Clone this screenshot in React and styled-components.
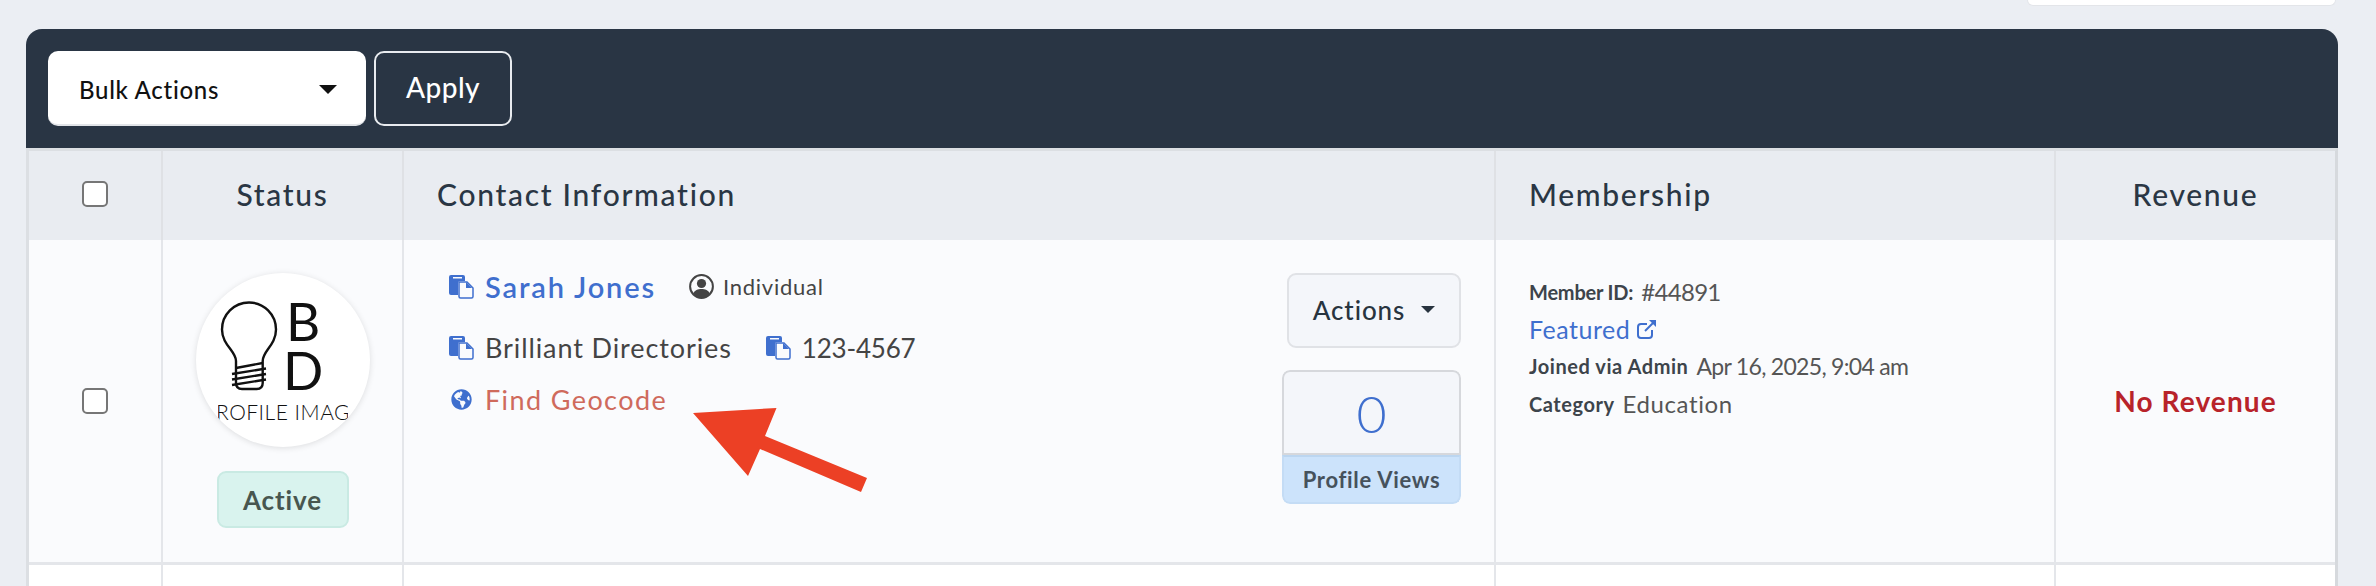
import React from 'react';
import styled, { createGlobalStyle } from 'styled-components';
import { FaGlobeAmericas } from 'react-icons/fa';

const GlobalStyle = createGlobalStyle`
  html, body {
    margin: 0;
    padding: 0;
    height: 100%;
    overflow: hidden;
    background: #ebeef3;
  }
  body {
    font-family: "Lato", "Open Sans", sans-serif;
    color: #28343f;
  }
`;

const Page = styled.div`
  width: 2376px;
  height: 586px;
  overflow: hidden;
  box-sizing: border-box;
  padding: 0 38px 0 26px;
`;

const TopStrip = styled.div`
  display: flex;
  justify-content: flex-end;
  height: 29px;
`;

const SearchStub = styled.div`
  width: 307px;
  height: 5px;
  margin-right: 2px;
  background: #fff;
  border: 1px solid #e3e5e9;
  border-top: none;
  border-radius: 0 0 8px 8px;
`;

const Panel = styled.section`
  position: relative;
  width: 2312px;
`;

const Toolbar = styled.div`
  height: 119px;
  box-sizing: border-box;
  padding: 22px 22px 0;
  display: flex;
  gap: 8px;
  background: #293544;
  border-radius: 16px 16px 0 0;
`;

const SelectBox = styled.div`
  width: 318px;
  height: 75px;
  box-sizing: border-box;
  padding: 3px 29px 0 31px;
  display: flex;
  align-items: center;
  justify-content: space-between;
  background: #fff;
  border-bottom: 2px solid #e2e4e8;
  border-radius: 10px;
  font-size: 24px;
  letter-spacing: 0.7px;
  font-weight: 500;
  color: #111;
`;

const Caret = styled.span`
  display: inline-block;
  width: 0;
  height: 0;
  border-left: ${p => p.$size}px solid transparent;
  border-right: ${p => p.$size}px solid transparent;
  border-top: ${p => p.$size}px solid ${p => p.$color};
`;

const ApplyButton = styled.button`
  width: 138px;
  height: 75px;
  padding: 0 0 4px;
  background: transparent;
  border: 2px solid #e8ebef;
  border-radius: 10px;
  color: #fff;
  font: 500 28px "Lato", sans-serif;
  letter-spacing: 0.5px;
`;

const Grid = styled.div`
  display: grid;
  grid-template-columns: 134px 241px 1092px 560px 279px;
  border-top: 3px solid #dcdfe3;
  border-right: 3px solid #d6d9dd;
  border-left: 3px solid #dcdfe3;
  box-sizing: border-box;
`;

const HeadCell = styled.div`
  height: 89px;
  box-sizing: border-box;
  display: flex;
  align-items: center;
  justify-content: ${p => (p.$left ? 'flex-start' : 'center')};
  padding-left: ${p => (p.$left ? '33px' : '0')};
  padding-bottom: 3px;
  background: #e9ecf1;
  border-right: ${p => (p.$last ? 'none' : '2px solid #dfe1e5')};
  font-size: 30px;
  font-weight: 500;
  letter-spacing: 1.7px;
  color: #2a3644;
`;

const BodyCell = styled.div`
  height: 325px;
  box-sizing: border-box;
  background: #fafbfd;
  border-right: ${p => (p.$last ? 'none' : '2px solid #e4e6ea')};
  border-bottom: 3px solid #e4e6ea;
`;

const CenterCell = styled(BodyCell)`
  display: flex;
  align-items: center;
  justify-content: center;
`;

const StatusCell = styled(BodyCell)`
  display: flex;
  flex-direction: column;
  align-items: center;
  padding-top: 33px;
  gap: 24px;
`;

const ContactCell = styled(BodyCell)`
  display: flex;
  justify-content: space-between;
  padding: 33px 33px 0 45px;
`;

const MemberCell = styled(BodyCell)`
  padding: 33px 0 0 33px;
`;

const TailCell = styled.div`
  height: 21px;
  background: #fff;
  border-right: ${p => (p.$last ? 'none' : '2px solid #e4e6ea')};
`;

const Check = styled.span`
  display: block;
  width: 26px;
  height: 26px;
  box-sizing: border-box;
  background: #fff;
  border: 2px solid #767676;
  border-radius: 5px;
`;

const Avatar = styled.div`
  width: 174px;
  height: 174px;
  border-radius: 50%;
  background: #fff;
  box-shadow: 0 1px 6px rgba(0, 0, 0, 0.12);
  overflow: hidden;
`;

const Badge = styled.span`
  width: 132px;
  height: 57px;
  box-sizing: border-box;
  display: flex;
  align-items: center;
  justify-content: center;
  background: #d9f3ee;
  border: 2px solid #c9eae3;
  border-radius: 9px;
  font-size: 26px;
  font-weight: 700;
  letter-spacing: 0.9px;
  color: #48564f;
`;

const Lines = styled.div`
  display: flex;
  flex-direction: column;
`;

const Line = styled.div`
  display: flex;
  align-items: center;
  height: ${p => p.$height}px;
  margin-bottom: ${p => p.$gap || 0}px;
`;

const IconSlot = styled.span`
  display: flex;
  justify-content: ${p => (p.$center ? 'center' : 'flex-start')};
  align-items: center;
  width: 25px;
  margin-right: 11px;
  margin-left: ${p => p.$offset || 0}px;
  color: #3f6fce;
`;

const NameLink = styled.span`
  font-size: 29px;
  font-weight: 600;
  letter-spacing: 1.85px;
  color: #3f6fce;
`;

const TypeTag = styled.span`
  display: flex;
  align-items: center;
  gap: 9px;
  margin-left: 33px;
  font-size: 22px;
  letter-spacing: 0.75px;
  color: #444;
`;

const PlainText = styled.span`
  font-size: ${p => p.$size || 27}px;
  letter-spacing: ${p => p.$spacing || '0.9px'};
  color: #444;
`;

const GeoLink = styled.span`
  font-size: 27px;
  letter-spacing: 1.4px;
  color: #cf6a5c;
`;

const Side = styled.div`
  display: flex;
  flex-direction: column;
  align-items: flex-end;
  gap: 22px;
`;

const ActionsButton = styled.div`
  width: 174px;
  height: 75px;
  box-sizing: border-box;
  padding-bottom: 2px;
  display: flex;
  align-items: center;
  justify-content: center;
  gap: 16px;
  background: #f4f6fa;
  border: 2px solid #e0e2e6;
  border-radius: 9px;
  font-size: 26px;
  font-weight: 500;
  letter-spacing: 0.9px;
  color: #28343f;
`;

const Counter = styled.div`
  width: 179px;
  border-radius: 8px;
  overflow: hidden;
`;

const CounterValue = styled.div`
  height: 85px;
  box-sizing: border-box;
  display: flex;
  align-items: center;
  justify-content: center;
  background: #f4f6fa;
  border: 2px solid #d6d8dc;
  border-radius: 8px 8px 0 0;
  font-size: 52px;
  font-weight: 300;
  color: #3f6fce;
`;

const CounterLabel = styled.div`
  height: 49px;
  box-sizing: border-box;
  display: flex;
  align-items: center;
  justify-content: center;
  background: #cce3fb;
  border: 2px solid #c4dcf5;
  border-top: 2px solid #bcd6f0;
  border-radius: 0 0 8px 8px;
  font-size: 22px;
  font-weight: 700;
  letter-spacing: 0.7px;
  color: #46525c;
`;

const MemberLine = styled.div`
  display: flex;
  align-items: center;
  height: 37.4px;
  gap: 8px;
  white-space: nowrap;
`;

const MemberKey = styled.span`
  font-size: 20px;
  font-weight: 700;
  letter-spacing: ${p => p.$spacing || '0.55px'};
  color: #3d444b;
`;

const MemberValue = styled.span`
  font-size: ${p => p.$size || 24}px;
  letter-spacing: ${p => p.$spacing || '0.6px'};
  color: #555;
`;

const FeaturedLink = styled.span`
  display: flex;
  align-items: center;
  gap: 7px;
  font-size: 25px;
  letter-spacing: 0.5px;
  color: #3f6fce;
`;

const NoRevenue = styled.span`
  font-size: 28px;
  font-weight: 700;
  letter-spacing: 1.1px;
  color: #b8232a;
`;

const ArrowMark = styled.svg`
  position: absolute;
  left: 667px;
  top: 379px;
`;

const PasteIcon = () => (
  <svg width="25" height="25" viewBox="0 0 25 25">
    <path d="M2 1h12a2 2 0 0 1 2 2v4H11a2 2 0 0 0-2 2v12H2a2 2 0 0 1-2-2V3a2 2 0 0 1 2-2z" fill="#3f6fce" />
    <rect x="4" y="3" width="9" height="1.500" fill="#fafbfd" />
    <path d="M10 8h8l6 6v8.500a1.500 1.500 0 0 1-1.500 1.500h-11a1.500 1.500 0 0 1-1.500-1.500z" fill="#fafbfd" stroke="#3f6fce" strokeWidth="1.500" />
    <path d="M17 8v6h6z" fill="#3f6fce" />
  </svg>
);

const UserRing = () => (
  <svg width="25" height="25" viewBox="0 0 25 25">
    <circle cx="12.500" cy="12.500" r="11.400" fill="none" stroke="#444" strokeWidth="2" />
    <circle cx="12.500" cy="9.500" r="4.600" fill="#444" />
    <path d="M4 20c1.500-4 5-5 8.500-5s7 1 8.500 5a11 11 0 0 1-17 0z" fill="#444" />
  </svg>
);

const ExternalIcon = () => (
  <svg width="20" height="20" viewBox="0 0 20 20" fill="none" stroke="#3f6fce" strokeWidth="2">
    <path d="M15 11v5a3 3 0 0 1-3 3H4a3 3 0 0 1-3-3V8a3 3 0 0 1 3-3h6" />
    <path d="M8 12L18 2" />
    <path d="M12 1h7v7z" fill="#3f6fce" stroke="none" />
  </svg>
);

const LogoMark = () => (
  <svg width="174" height="174" viewBox="0 0 174 174">
    <g fill="none" stroke="#111" strokeWidth="2.400">
      <path d="M40 88C40 78 26 72 26 56.500a27 27 0 0 1 54 0C80 72 66.700 78 66.700 88V110q0 6-6 6H46q-6 0-6-6z" />
      <path d="M40 95L66.700 90M36 101L70 95.500M36 106.500L70 101M36 112L70 106.500" />
    </g>
    <text x="90" y="68" fontFamily="Lato, sans-serif" fontSize="53" fill="#111">B</text>
    <text x="87" y="117" fontFamily="Lato, sans-serif" fontSize="53" fill="#111">D</text>
    <svg x="22" y="125" width="130" height="30">
      <text x="65" y="22" textAnchor="middle" fontFamily="Lato, sans-serif" fontWeight="300" fontSize="21" letterSpacing="0.5" fill="#111">PROFILE IMAGE</text>
    </svg>
  </svg>
);

export default function App() {
  return (
    <Page>
      <GlobalStyle />
      <TopStrip>
        <SearchStub />
      </TopStrip>
      <Panel>
        <Toolbar>
          <SelectBox>
            Bulk Actions
            <Caret $size={9} $color="#111" />
          </SelectBox>
          <ApplyButton>Apply</ApplyButton>
        </Toolbar>
        <Grid>
          <HeadCell><Check /></HeadCell>
          <HeadCell>Status</HeadCell>
          <HeadCell $left>Contact Information</HeadCell>
          <HeadCell $left>Membership</HeadCell>
          <HeadCell $last>Revenue</HeadCell>

          <CenterCell><Check /></CenterCell>
          <StatusCell>
            <Avatar><LogoMark /></Avatar>
            <Badge>Active</Badge>
          </StatusCell>
          <ContactCell>
            <Lines>
              <Line $height={27} $gap={34}>
                <IconSlot><PasteIcon /></IconSlot>
                <NameLink>Sarah Jones</NameLink>
                <TypeTag><UserRing />Individual</TypeTag>
              </Line>
              <Line $height={27} $gap={25}>
                <IconSlot><PasteIcon /></IconSlot>
                <PlainText>Brilliant Directories</PlainText>
                <IconSlot $offset={34}><PasteIcon /></IconSlot>
                <PlainText $size={26} $spacing="-0.2px">123-4567</PlainText>
              </Line>
              <Line $height={27}>
                <IconSlot $center><FaGlobeAmericas size={21} /></IconSlot>
                <GeoLink>Find Geocode</GeoLink>
              </Line>
            </Lines>
            <Side>
              <ActionsButton>
                Actions
                <Caret $size={7.5} $color="#28343f" />
              </ActionsButton>
              <Counter>
                <CounterValue>0</CounterValue>
                <CounterLabel>Profile Views</CounterLabel>
              </Counter>
            </Side>
          </ContactCell>
          <MemberCell>
            <MemberLine><MemberKey $spacing="-0.2px">Member ID:</MemberKey><MemberValue $spacing="-0.7px">#44891</MemberValue></MemberLine>
            <MemberLine><FeaturedLink>Featured<ExternalIcon /></FeaturedLink></MemberLine>
            <MemberLine><MemberKey>Joined via Admin</MemberKey><MemberValue $size={23} $spacing="-0.7px">Apr 16, 2025, 9:04 am</MemberValue></MemberLine>
            <MemberLine><MemberKey>Category</MemberKey><MemberValue>Education</MemberValue></MemberLine>
          </MemberCell>
          <CenterCell $last><NoRevenue>No Revenue</NoRevenue></CenterCell>

          <TailCell />
          <TailCell />
          <TailCell />
          <TailCell />
          <TailCell $last />
        </Grid>
        <ArrowMark width="180" height="90" viewBox="0 0 180 90">
          <path d="M0 5L83.500 0L72 28L174 70L168 84L67 41L55 68z" fill="#ec4025" />
        </ArrowMark>
      </Panel>
    </Page>
  );
}
